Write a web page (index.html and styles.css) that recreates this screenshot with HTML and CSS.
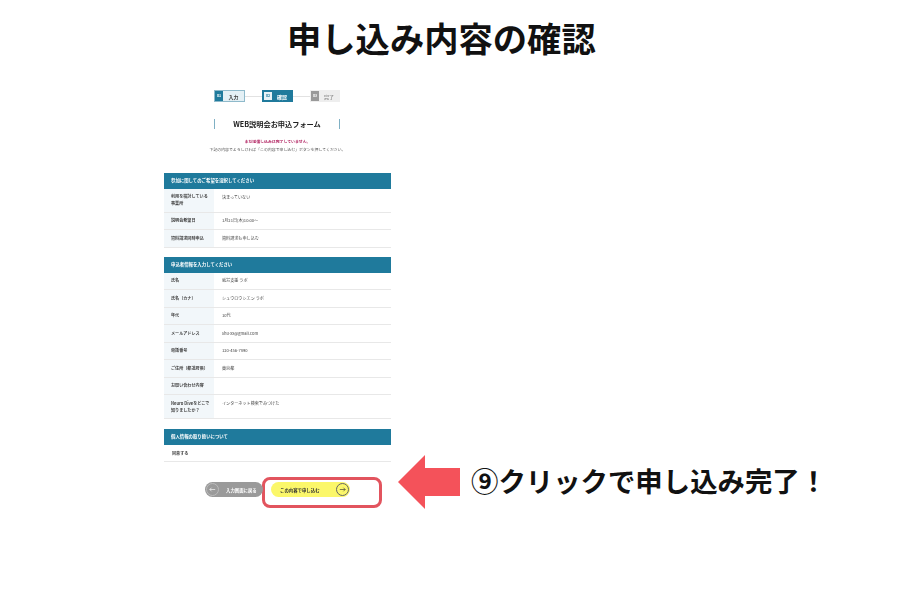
FILE: index.html
```html
<!DOCTYPE html>
<html lang="ja">
<head>
<meta charset="utf-8">
<title>申し込み内容の確認</title>
<link rel="stylesheet" href="styles.css">
</head>
<body>
<main class="slide">
  <h1 class="slide-title">申し込み内容の確認</h1>
  <section class="sheet">
    <ol class="steps">
      <li class="step step-done"><span class="step-no">01</span><span class="step-name">入力</span></li>
      <li class="step-line"></li>
      <li class="step step-now"><span class="step-no">02</span><span class="step-name">確認</span></li>
      <li class="step-line"></li>
      <li class="step step-next"><span class="step-no">03</span><span class="step-name">完了</span></li>
    </ol>
    <h2 class="form-title">WEB説明会お申込フォーム</h2>
    <p class="warn">まだ送信し込みは完了していません。</p>
    <p class="lead">下記の内容でよろしければ「この内容で申し込む」ボタンを押してください。</p>

    <h3 class="band band-first">参加に関してのご希望を選択してください</h3>
    <dl class="rows">
      <div class="row row-tall"><dt>利用を検討している<br>事業所</dt><dd>決まっていない</dd></div>
      <div class="row"><dt>説明会希望日</dt><dd>1月21日(木)10:00～</dd></div>
      <div class="row"><dt>資料請求同時申込</dt><dd>資料請求も申し込む</dd></div>
    </dl>

    <h3 class="band band-next">申込者情報を入力してください</h3>
    <dl class="rows">
      <div class="row"><dt>氏名</dt><dd>就労支援 ラボ</dd></div>
      <div class="row"><dt>氏名（カナ）</dt><dd>シュウロウシエン ラボ</dd></div>
      <div class="row"><dt>年代</dt><dd>10代</dd></div>
      <div class="row"><dt>メールアドレス</dt><dd>shu-xx@gmail.com</dd></div>
      <div class="row"><dt>電話番号</dt><dd>120-456-7890</dd></div>
      <div class="row"><dt>ご住所（都道府県）</dt><dd>東京都</dd></div>
      <div class="row"><dt>お問い合わせ内容</dt><dd></dd></div>
      <div class="row row-tall"><dt>Neuro Diveをどこで<br>知りましたか？</dt><dd>インターネット検索でみつけた</dd></div>
    </dl>

    <h3 class="band band-last">個人情報の取り扱いについて</h3>
    <div class="agree">同意する</div>
  </section>

  <div class="actions">
    <a class="btn-back"><span class="circle">
      <svg viewBox="0 0 10 10" class="arrow-ico"><path d="M8 5H2M4 3 2 5l2 2"/></svg>
    </span><span>入力画面に戻る</span></a>
    <div class="frame">
      <a class="btn-send"><span>この内容で申し込む</span><span class="circle circle-send">
        <svg viewBox="0 0 10 10" class="arrow-ico"><path d="M2 5h6M6 3l2 2-2 2"/></svg>
      </span></a>
    </div>
    <svg class="callout-arrow" viewBox="0 0 62 54"><path d="M0 27 27 0V13H62V41H27V54Z"/></svg>
    <p class="callout">⑨クリックで申し込み完了！</p>
  </div>
</main>
</body>
</html>
```
FILE: styles.css
```css
* { box-sizing: border-box; }
html, body { margin: 0; background: #fff; }
body { font-family: "Noto Sans CJK JP", "Noto Sans", sans-serif; color: #222; }
.slide { width: 900px; height: 600px; overflow: hidden; display: flex; flex-direction: column; }
.slide-title { margin: 0; padding-top: 12px; height: 90px; padding-left: 287px; font-size: 34.3px; line-height: 50px; font-weight: 700; color: #111; white-space: nowrap; }

.sheet { width: 227px; margin-left: 164px; display: flex; flex-direction: column; filter: blur(.3px); }
.steps { list-style: none; margin: 0 0 0 50px; padding: 0; display: flex; align-items: center; height: 12px; }
.step { width: 31px; height: 12px; display: flex; align-items: center; font-size: 5px; line-height: 1; font-weight: 700; border: 1px solid #1f7a9c; }
.step-no { width: 8px; height: 10px; flex: none; display: flex; align-items: center; justify-content: center; font-size: 3.5px; line-height: 1; }
.step-name { flex: 1; text-align: center; }
.step-line { width: 17px; height: 1px; background: #e2e2e2; }
.step-done { background: #e4f0f5; color: #444; border-color: #8fbacb; }
.step-done .step-no { background: #1f7a9c; color: #fff; }
.step-now { background: #1f7a9c; color: #fff; }
.step-now .step-no { background: #e8f2f6; color: #1f7a9c; margin-left: 1px; height: 8px; }
.step-next { background: #eee; color: #999; border-color: #eee; width: 30px; }
.step-next .step-no { background: #999; color: #fff; }

.form-title { margin: 17px 0 0 50px; width: 126px; height: 10px; border-left: 1px solid #7fb0c4; border-right: 1px solid #7fb0c4; font-size: 7.2px; line-height: 10px; font-weight: 700; text-align: center; color: #222; white-space: nowrap; }
.warn { margin: 10px 0 0; height: 5px; font-size: 3.9px; line-height: 5px; font-weight: 700; text-align: center; color: #b0205f; }
.lead { margin: 3px 0 0 0; height: 5px; font-size: 3.9px; line-height: 5px; text-align: center; color: #555; white-space: nowrap; }

.band { margin: 0; height: 15.5px; background: #1f7a9c; color: #fff; font-size: 4.4px; font-weight: 700; line-height: 15px; padding-left: 7px; }
.band-first { margin-top: 21px; }
.band-next { margin-top: 9.5px; }
.band-last { margin-top: 10px; }
.rows { margin: 0; }
.row { display: flex; height: 17.5px; border-bottom: 1px solid #e8e8e8; font-size: 4.1px; line-height: 7px; color: #444; }
.row-tall { height: 24px; }
.row dt { width: 50px; flex: none; background: #f2f7fa; padding-left: 7px; font-weight: 700; display: flex; align-items: center; white-space: nowrap; }
.row dd { margin: 0; padding: 5px 0 0 8px; }
.row:not(.row-tall) dd { padding-top: 0; display: flex; align-items: center; }
.agree { height: 17.5px; border-bottom: 1px solid #e8e8e8; font-size: 4.1px; font-weight: 700; line-height: 17px; padding-left: 8px; color: #444; }

.actions { margin: 15px 0 0 205px; display: flex; align-items: center; height: 31px; }
.btn-back { width: 58px; height: 15px; margin-bottom: 6px; border-radius: 8px; background: #9a9a9a; color: #fff; font-size: 4.4px; font-weight: 700; display: flex; align-items: center; gap: 7px; padding-left: 1px; flex: none; filter: blur(.3px); }
.circle { width: 13px; height: 13px; border-radius: 50%; border: 1px solid #bbb; display: flex; align-items: center; justify-content: center; flex: none; }
.arrow-ico { width: 9px; height: 9px; fill: none; stroke: currentColor; stroke-width: .7; }
.frame { margin-left: -1px; width: 120px; height: 31px; border: 3px solid #e2545e; border-radius: 8px; display: flex; align-items: center; padding-left: 6px; flex: none; }
.btn-send { width: 79px; height: 15px; margin-bottom: 6px; border-radius: 8px; background: #fbf76a; color: #333; font-size: 4.4px; font-weight: 700; display: flex; align-items: center; justify-content: space-between; padding: 0 1px 0 9px; filter: blur(.3px); }
.circle-send { border-color: #666; background: #fbf76a; }
.callout-arrow { margin: 0 0 22px 16px; width: 62px; height: 54px; fill: #f4525a; flex: none; }
.callout { margin: 0 0 25px 11px; font-size: 27.4px; line-height: 40px; font-weight: 700; color: #111; white-space: nowrap; }
```
